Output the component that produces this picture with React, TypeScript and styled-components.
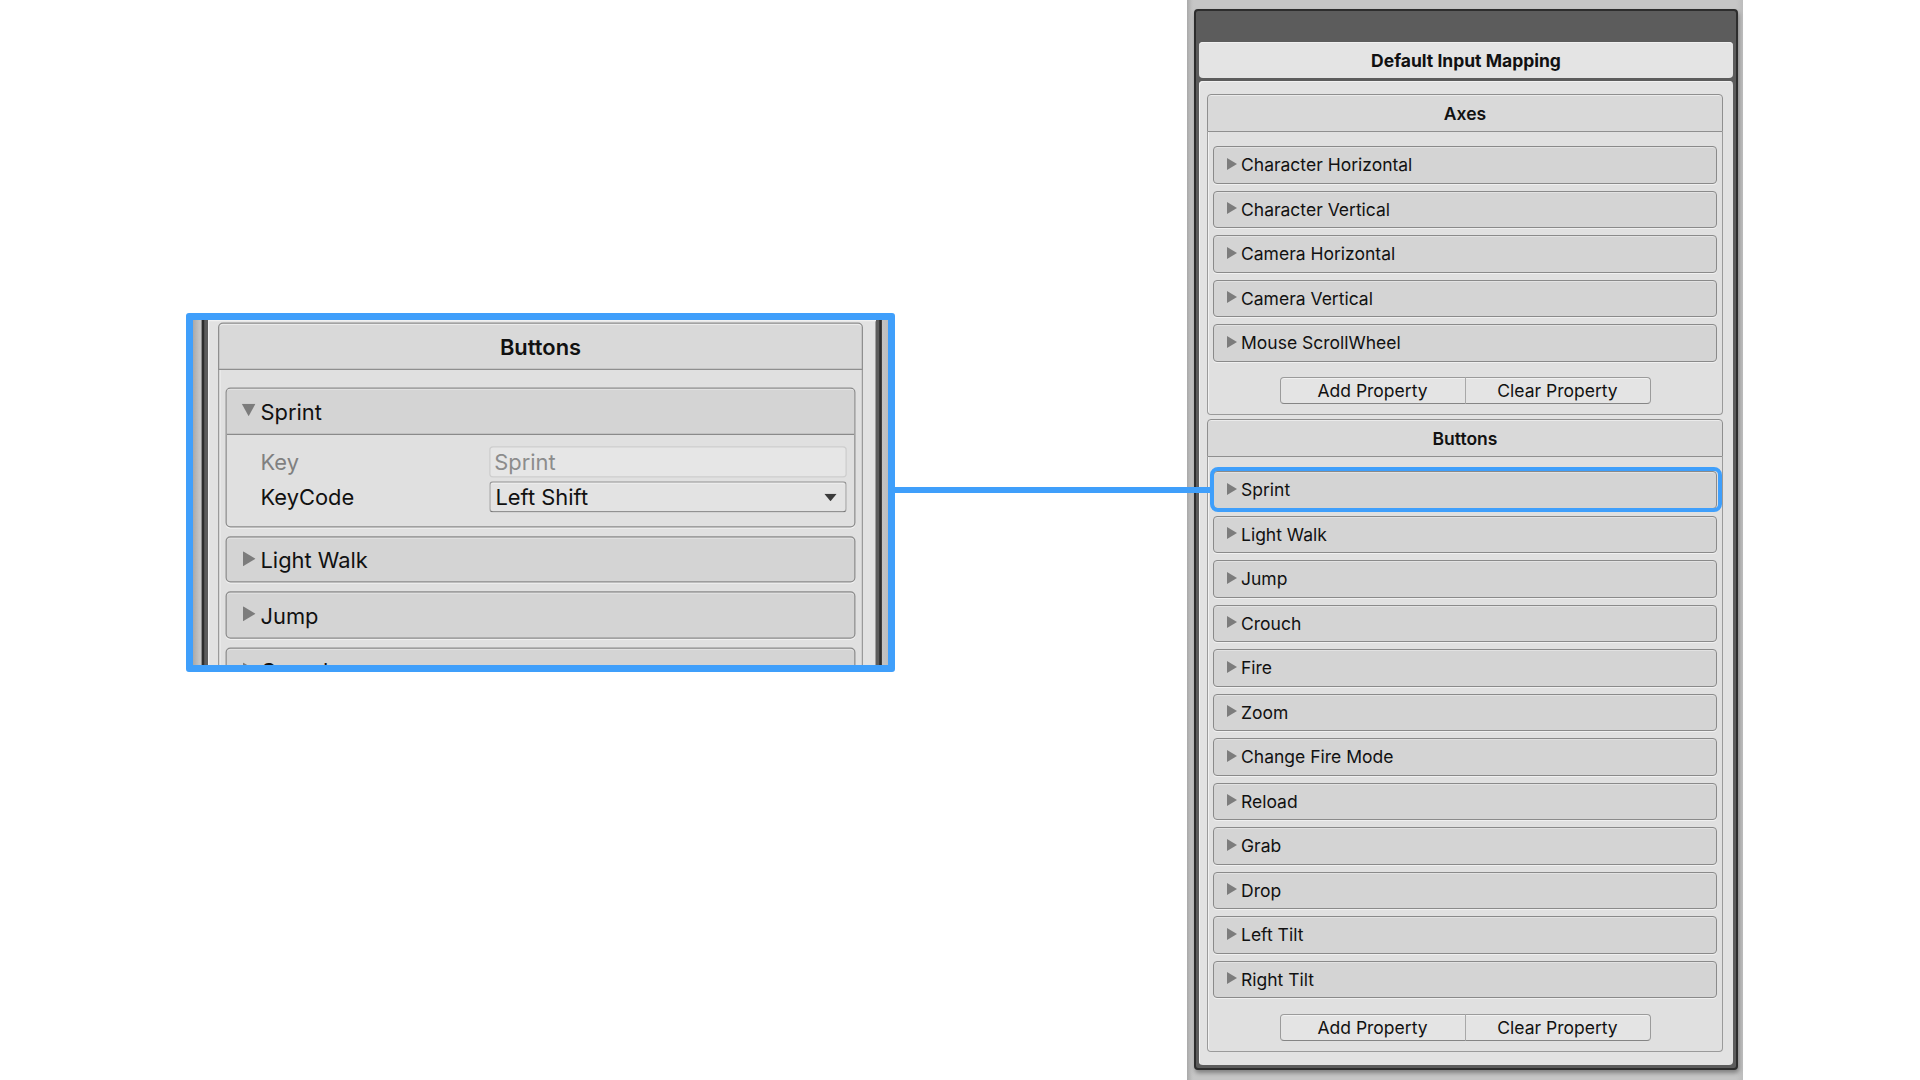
import React from 'react';
import styled, { createGlobalStyle, css } from 'styled-components';

const GlobalStyle = createGlobalStyle`
  html, body { margin: 0; padding: 0; background: #ffffff; }
  body { font-family: Inter, "Noto Sans", "Liberation Sans", sans-serif; }
  * { box-sizing: border-box; }
`;

const BLUE = '#3f9ffb';

const Page = styled.div`
  width: 1920px;
  height: 1080px;
  display: flex;
  background: #ffffff;
  overflow: hidden;
  position: relative;
`;

const Stage = styled.div`
  width: 1187px;
  flex: none;
  position: relative;
  padding: 313px 0 0 186px;
`;

const Callout = styled.div`
  width: 709px;
  height: 359px;
  border: 7px solid ${BLUE};
  border-radius: 3px;
  overflow: hidden;
  background: #c6c6c6;
`;

const Magnifier = styled.div`
  width: 556px;
  height: 276px;
  overflow: hidden;
  transform: scale(1.25);
  transform-origin: 0 0;
`;

const Connector = styled.div`
  position: absolute;
  left: 895px;
  top: 487px;
  width: 316px;
  height: 6px;
  background: ${BLUE};
  z-index: 5;
`;

const Column = styled.div<{ $slice?: boolean }>`
  width: 556px;
  height: ${(p) => (p.$slice ? '276px' : '1080px')};
  flex: none;
  display: flex;
  background: linear-gradient(90deg, #a9a9a9 0px, #c3c3c3 5px, #c6c6c6 7px, #c6c6c6 549px, #bdbdbd 556px);
  padding: ${(p) => (p.$slice ? '0 5px 0 7px' : '9px 5px 10px 7px')};
`;

const Frame = styled.div<{ $slice?: boolean }>`
  flex: 1;
  display: flex;
  flex-direction: column;
  background: #5c5c5c;
  border: 2px solid #2d2d2d;
  border-radius: 4px;
  padding: 0 3px 3px;
  box-shadow: 1px 3px 4px rgba(0, 0, 0, 0.35);
  ${(p) =>
    p.$slice &&
    css`
      border-top: none;
      border-bottom: none;
      border-radius: 0;
      padding: 0 3px;
      box-shadow: none;
    `}
`;

const FrameBar = styled.div`
  height: 31px;
  flex: none;
`;

const TitleBar = styled.div`
  height: 36px;
  flex: none;
  display: flex;
  align-items: center;
  justify-content: center;
  background: #e4e4e4;
  border-radius: 4px;
  font-weight: 700;
  font-size: 17.5px;
  color: #111111;
  box-shadow: inset 0 1px 0 #f0f0f0;
`;

const Content = styled.div<{ $slice?: boolean }>`
  margin-top: ${(p) => (p.$slice ? '0' : '3px')};
  flex: 1;
  background: #e2e2e2;
  border-radius: ${(p) => (p.$slice ? '0' : '4px')};
  padding: ${(p) => (p.$slice ? '2.4px 10px 0 8px' : '13px 10px 0 8px')};
  display: flex;
  flex-direction: column;
  gap: 4px;
  box-shadow: inset 1px 1px 0 #f1f1f1;
`;

const Group = styled.section`
  display: flex;
  flex-direction: column;
  flex: none;
`;

const GroupHeader = styled.div`
  height: 38px;
  display: flex;
  align-items: center;
  justify-content: center;
  background: #d9d9d9;
  border: 1px solid #8f8f8f;
  border-radius: 4px 4px 0 0;
  font-weight: 600;
  font-size: 17.5px;
  color: #111111;
  box-shadow: inset 0 1px 0 #ebebeb;
`;

const GroupBody = styled.div`
  border: 1px solid #9a9a9a;
  border-top: none;
  border-radius: 0 0 4px 4px;
  background: #e0e0e0;
  padding: 14px 5px 10px;
  display: flex;
  flex-direction: column;
  gap: 7px;
  box-shadow: inset 1px 0 0 #f2f2f2;
`;

const Row = styled.div<{ $highlight?: boolean }>`
  position: relative;
  height: 37.5px;
  flex: none;
  display: flex;
  align-items: center;
  gap: 4px;
  background: #d4d4d4;
  border: 1px solid #8a8a8a;
  border-radius: 4px;
  padding-left: 13px;
  font-size: 17.5px;
  color: #111111;
  box-shadow: inset 0 1px 0 #e2e2e2, 0 1px 0 #f0f0f0;
  ${(p) =>
    p.$highlight &&
    css`
      &::after {
        content: '';
        position: absolute;
        top: -5px;
        left: -4px;
        right: -6px;
        bottom: -4px;
        border: 4px solid ${BLUE};
        border-radius: 8px;
        pointer-events: none;
      }
    `}
`;

const Foldout = styled.div`
  flex: none;
  border: 1px solid #8a8a8a;
  border-radius: 4px;
  background: #e0e0e0;
  overflow: hidden;
  box-shadow: 0 1px 0 #f0f0f0;
`;

const FoldoutHeader = styled.div`
  height: 36.5px;
  display: flex;
  align-items: center;
  gap: 4px;
  padding-left: 12px;
  background: #d4d4d4;
  border-bottom: 1px solid #8a8a8a;
  font-size: 17.5px;
  color: #111111;
  box-shadow: inset 0 1px 0 #e2e2e2;
`;

const FoldoutBody = styled.div`
  display: grid;
  grid-template-columns: 183px 1fr;
  row-gap: 3px;
  padding: 9px 6px 10.5px 27px;
  align-items: center;
`;

const FieldLabel = styled.div<{ $disabled?: boolean }>`
  font-size: 17.5px;
  color: ${(p) => (p.$disabled ? '#808080' : '#111111')};
`;

const TextField = styled.div`
  height: 25px;
  display: flex;
  align-items: center;
  padding-left: 3px;
  background: #e6e6e6;
  border: 1px solid #cdcdcd;
  border-radius: 3px;
  font-size: 17.5px;
  color: #8c8c8c;
`;

const Dropdown = styled.div`
  height: 25.6px;
  display: flex;
  align-items: center;
  justify-content: space-between;
  padding: 0 7px 0 4px;
  background: #e3e3e3;
  border: 1px solid #9a9a9a;
  border-bottom-color: #777777;
  border-radius: 3px;
  font-size: 17.5px;
  color: #111111;
  box-shadow: inset 0 1px 0 #efefef;
`;

const Caret = styled.svg`
  flex: none;
  display: block;
  margin-top: -2px;
`;

const ButtonBar = styled.div`
  display: flex;
  justify-content: center;
  margin-top: 8.5px;
`;

const Btn = styled.button<{ $side: 'left' | 'right' }>`
  width: 186px;
  height: 27px;
  margin: 0;
  padding: 0;
  font-family: inherit;
  font-size: 17.5px;
  color: #111111;
  background: #e4e4e4;
  border: 1px solid #9b9b9b;
  border-bottom-color: #858585;
  box-shadow: inset 0 1px 0 #f1f1f1;
  border-radius: ${(p) => (p.$side === 'left' ? '4px 0 0 4px' : '0 4px 4px 0')};
  ${(p) => p.$side === 'right' && css`border-left: 1px solid #a8a8a8; margin-left: -1px;`}
`;

const RightArrow = () => (
  <Caret width="10" height="12" viewBox="0 0 10 12">
    <polygon points="0,0 10,6 0,12" fill="#7c7c7c" />
  </Caret>
);

const DownArrow = () => (
  <Caret width="11" height="10" viewBox="0 0 11 10">
    <polygon points="0,0 11,0 5.5,10" fill="#7c7c7c" />
  </Caret>
);

const DropArrow = () => (
  <svg width="10" height="6" viewBox="0 0 10 6" style={{ display: 'block' }}>
    <polygon points="0,0 10,0 5,6" fill="#3a3a3a" />
  </svg>
);

const axes = ['Character Horizontal', 'Character Vertical', 'Camera Horizontal', 'Camera Vertical', 'Mouse ScrollWheel'];
const buttons = [
  'Sprint',
  'Light Walk',
  'Jump',
  'Crouch',
  'Fire',
  'Zoom',
  'Change Fire Mode',
  'Reload',
  'Grab',
  'Drop',
  'Left Tilt',
  'Right Tilt',
];

const PropertyButtons = () => (
  <ButtonBar>
    <Btn $side="left">Add Property</Btn>
    <Btn $side="right">Clear Property</Btn>
  </ButtonBar>
);

const ItemRow = ({ label, highlight }: { label: string; highlight?: boolean }) => (
  <Row $highlight={highlight}>
    <RightArrow />
    <span>{label}</span>
  </Row>
);

const SprintExpanded = () => (
  <Foldout>
    <FoldoutHeader>
      <DownArrow />
      <span>Sprint</span>
    </FoldoutHeader>
    <FoldoutBody>
      <FieldLabel $disabled>Key</FieldLabel>
      <TextField>Sprint</TextField>
      <FieldLabel>KeyCode</FieldLabel>
      <Dropdown>
        <span>Left Shift</span>
        <DropArrow />
      </Dropdown>
    </FoldoutBody>
  </Foldout>
);

export default function App() {
  return (
    <>
      <GlobalStyle />
      <Page>
        <Stage>
          <Callout>
            <Magnifier>
              <Column $slice>
                <Frame $slice>
                  <Content $slice>
                    <Group>
                      <GroupHeader>Buttons</GroupHeader>
                      <GroupBody>
                        <SprintExpanded />
                        {buttons.slice(1, 5).map((b) => (
                          <ItemRow key={b} label={b} />
                        ))}
                      </GroupBody>
                    </Group>
                  </Content>
                </Frame>
              </Column>
            </Magnifier>
          </Callout>
          <Connector />
        </Stage>
        <Column>
          <Frame>
            <FrameBar />
            <TitleBar>Default Input Mapping</TitleBar>
            <Content>
              <Group>
                <GroupHeader>Axes</GroupHeader>
                <GroupBody>
                  {axes.map((a) => (
                    <ItemRow key={a} label={a} />
                  ))}
                  <PropertyButtons />
                </GroupBody>
              </Group>
              <Group>
                <GroupHeader>Buttons</GroupHeader>
                <GroupBody>
                  {buttons.map((b, i) => (
                    <ItemRow key={b} label={b} highlight={i === 0} />
                  ))}
                  <PropertyButtons />
                </GroupBody>
              </Group>
            </Content>
          </Frame>
        </Column>
      </Page>
    </>
  );
}
